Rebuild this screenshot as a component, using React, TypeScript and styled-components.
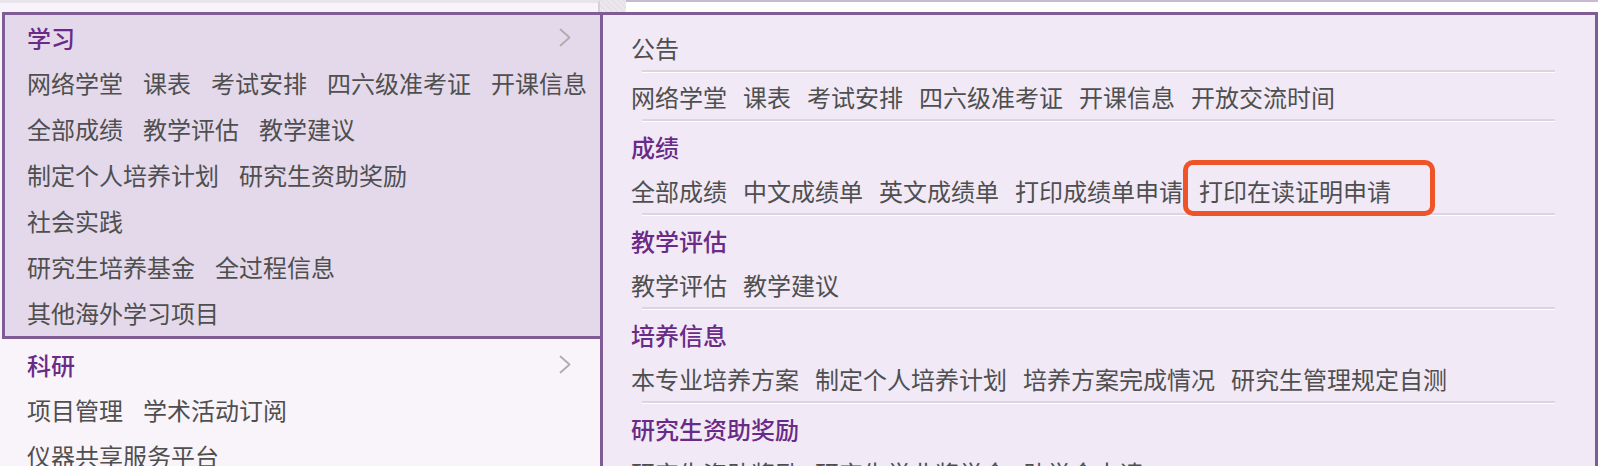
import React from "react";
import styled, { createGlobalStyle } from "styled-components";

const PURPLE_BORDER = "#7f5c93";
const TITLE = "#6a2a88";
const TEXT = "#4f4f4f";

const GlobalStyle = createGlobalStyle`
  html, body {
    margin: 0;
    padding: 0;
    background: #f9f4fa;
    overflow: hidden;
  }
  body {
    font-family: "Noto Sans CJK SC", "Noto Sans", sans-serif;
  }
  * { box-sizing: border-box; }
`;

const Page = styled.div`
  width: 1598px;
  height: 466px;
  overflow: hidden;
  display: flex;
  flex-direction: column;
  background: #f9f4fa;
`;

const TopStrip = styled.div`
  display: flex;
  height: 12px;
  flex: none;
`;

const SideTop = styled.div`
  width: 600px;
  background: #f8f3fa;
  border-top: 3px solid #e9e3ec;
  border-right: 2px solid #d6d0d9;
`;

const GutterTop = styled.div`
  width: 26px;
  background: repeating-linear-gradient(45deg, #e6e2e8 0 2px, #ece8ee 2px 4px);
`;

const ContentTop = styled.div`
  flex: 1;
  background: #ffffff;
  border-top: 2px solid #c7b9cf;
`;

const MenuArea = styled.div`
  display: flex;
  flex: 1;
  align-items: stretch;
  min-height: 0;
`;

const Sidebar = styled.nav`
  width: 600px;
  flex: none;
  background: #f9f4fa;
`;

const MenuItem = styled.div<{ $active?: boolean }>`
  margin-left: 2px;
  border: 3px solid ${(p) => (p.$active ? PURPLE_BORDER : "transparent")};
  border-right: none;
  background: ${(p) => (p.$active ? "#e4d9ea" : "transparent")};
  padding: 0 28px 0 22px;
`;

const ItemTitle = styled.div`
  display: flex;
  align-items: center;
  justify-content: space-between;
  height: 45px;
  font-size: 24px;
  font-weight: 500;
  color: ${TITLE};
`;

const SideRow = styled.div`
  height: 46px;
  line-height: 46px;
  font-size: 24px;
  color: ${TEXT};
  white-space: nowrap;
  display: flex;
  gap: 20px;
`;

const SideLink = styled.span`
  display: inline-block;
`;

const Flyout = styled.section`
  flex: 1;
  border: 3px solid ${PURPLE_BORDER};
  border-bottom: none;
  background: #f1e9f5;
  padding: 13px 28px 0 28px;
  min-width: 0;
`;

const GroupTitle = styled.div`
  height: 45px;
  line-height: 41px;
  padding-bottom: 4px;
  font-size: 24px;
  font-weight: 500;
  color: ${TITLE};
`;

const LinkRow = styled.div`
  height: 42px;
  line-height: 40px;
  padding-bottom: 2px;
  font-size: 24px;
  color: ${TEXT};
  white-space: nowrap;
  display: flex;
  gap: 16px;
`;

const FlyLink = styled.span<{ $marked?: boolean }>`
  display: inline-block;
  position: relative;
  &::after {
    content: "";
    display: ${(p) => (p.$marked ? "block" : "none")};
    position: absolute;
    left: -16px;
    right: -44px;
    top: -11px;
    bottom: -5px;
    border: 5px solid #ee5428;
    border-radius: 10px;
  }
`;

const Divider = styled.div`
  height: 2px;
  background: #ddd3e1;
  box-shadow: 0 1px 0 #ffffff;
  margin: 0 12px 5px 11px;
`;

const Chevron: React.FC = () => (
  <svg width="14" height="19" viewBox="0 0 14 19" fill="none">
    <path d="M2.5 1.5 L11.5 9.5 L2.5 17.5" stroke="#adadad" strokeWidth="1.8" strokeLinejoin="round" strokeLinecap="round" />
  </svg>
);

type SideSection = { title: string; active?: boolean; rows: string[][] };

const sideSections: SideSection[] = [
  {
    title: "学习",
    active: true,
    rows: [
      ["网络学堂", "课表", "考试安排", "四六级准考证", "开课信息"],
      ["全部成绩", "教学评估", "教学建议"],
      ["制定个人培养计划", "研究生资助奖励"],
      ["社会实践"],
      ["研究生培养基金", "全过程信息"],
      ["其他海外学习项目"],
    ],
  },
  {
    title: "科研",
    rows: [["项目管理", "学术活动订阅"], ["仪器共享服务平台"]],
  },
];

type FlyGroup = { title?: string; links: string[]; marked?: string };

const flyGroups: FlyGroup[] = [
  { links: ["公告"] },
  { links: ["网络学堂", "课表", "考试安排", "四六级准考证", "开课信息", "开放交流时间"] },
  {
    title: "成绩",
    links: ["全部成绩", "中文成绩单", "英文成绩单", "打印成绩单申请", "打印在读证明申请"],
    marked: "打印在读证明申请",
  },
  { title: "教学评估", links: ["教学评估", "教学建议"] },
  { title: "培养信息", links: ["本专业培养方案", "制定个人培养计划", "培养方案完成情况", "研究生管理规定自测"] },
  { title: "研究生资助奖励", links: ["研究生资助奖励", "研究生学业奖学金", "助学金申请"] },
];

export default function App() {
  return (
    <>
      <GlobalStyle />
      <Page>
        <TopStrip>
          <SideTop />
          <GutterTop />
          <ContentTop />
        </TopStrip>
        <MenuArea>
          <Sidebar>
            {sideSections.map((s) => (
              <MenuItem key={s.title} $active={s.active}>
                <ItemTitle>
                  <span>{s.title}</span>
                  <Chevron />
                </ItemTitle>
                {s.rows.map((row, i) => (
                  <SideRow key={i}>
                    {row.map((l) => (
                      <SideLink key={l}>{l}</SideLink>
                    ))}
                  </SideRow>
                ))}
              </MenuItem>
            ))}
          </Sidebar>
          <Flyout>
            {flyGroups.map((g, i) => (
              <div key={i}>
                {g.title && <GroupTitle>{g.title}</GroupTitle>}
                <LinkRow>
                  {g.links.map((l) => (
                    <FlyLink key={l} $marked={g.marked === l}>
                      {l}
                    </FlyLink>
                  ))}
                </LinkRow>
                <Divider />
              </div>
            ))}
          </Flyout>
        </MenuArea>
      </Page>
    </>
  );
}
